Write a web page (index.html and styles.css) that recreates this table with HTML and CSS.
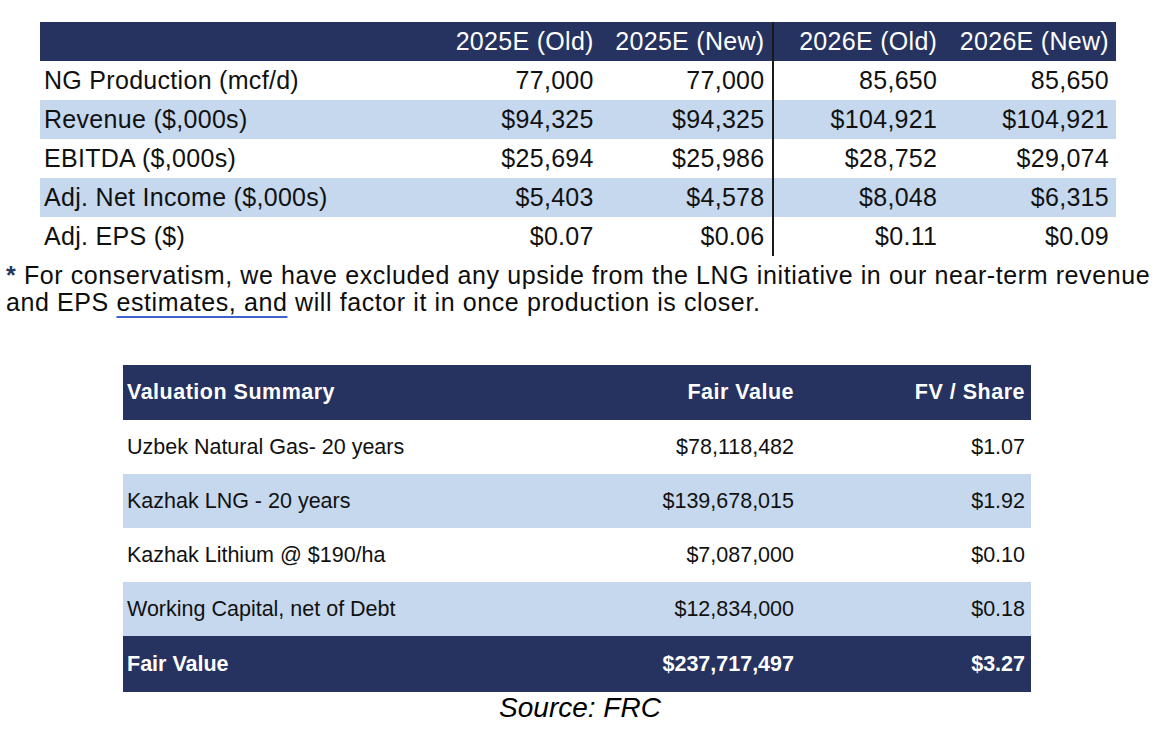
FILE: index.html
```html
<!DOCTYPE html>
<html>
<head>
<meta charset="utf-8">
<link rel="stylesheet" href="styles.css">
</head>
<body>
<div class="page">
  <table class="est">
    <colgroup>
      <col class="c-label"><col class="c-num"><col class="c-num"><col class="c-num"><col class="c-num">
    </colgroup>
    <thead>
      <tr>
        <th></th>
        <th>2025E (Old)</th>
        <th class="split">2025E (New)</th>
        <th>2026E (Old)</th>
        <th>2026E (New)</th>
      </tr>
    </thead>
    <tbody>
      <tr>
        <td>NG Production (mcf/d)</td><td>77,000</td><td class="split">77,000</td><td>85,650</td><td>85,650</td>
      </tr>
      <tr class="alt">
        <td>Revenue ($,000s)</td><td>$94,325</td><td class="split">$94,325</td><td>$104,921</td><td>$104,921</td>
      </tr>
      <tr>
        <td>EBITDA ($,000s)</td><td>$25,694</td><td class="split">$25,986</td><td>$28,752</td><td>$29,074</td>
      </tr>
      <tr class="alt">
        <td>Adj. Net Income ($,000s)</td><td>$5,403</td><td class="split">$4,578</td><td>$8,048</td><td>$6,315</td>
      </tr>
      <tr>
        <td>Adj. EPS ($)</td><td>$0.07</td><td class="split">$0.06</td><td>$0.11</td><td>$0.09</td>
      </tr>
    </tbody>
  </table>

  <p class="note"><span class="star">*</span> For conservatism, we have excluded any upside from the LNG initiative in our near-term revenue<br>and EPS <span class="spell">estimates, and</span> will factor it in once production is closer.</p>

  <div class="val-wrap">
    <table class="val">
      <colgroup>
        <col class="v-label"><col class="v-fv"><col class="v-sh">
      </colgroup>
      <thead>
        <tr><th>Valuation Summary</th><th>Fair Value</th><th>FV / Share</th></tr>
      </thead>
      <tbody>
        <tr><td>Uzbek Natural Gas- 20 years</td><td>$78,118,482</td><td>$1.07</td></tr>
        <tr class="alt"><td>Kazhak LNG - 20 years</td><td>$139,678,015</td><td>$1.92</td></tr>
        <tr><td>Kazhak Lithium @ $190/ha</td><td>$7,087,000</td><td>$0.10</td></tr>
        <tr class="alt"><td>Working Capital, net of Debt</td><td>$12,834,000</td><td>$0.18</td></tr>
      </tbody>
      <tfoot>
        <tr><td>Fair Value</td><td>$237,717,497</td><td>$3.27</td></tr>
      </tfoot>
    </table>
    <p class="source">Source: FRC</p>
  </div>
</div>
</body>
</html>
```

FILE: styles.css
```css
html, body {
  margin: 0;
  padding: 0;
  background: #ffffff;
}

body {
  font-family: "Liberation Sans", Arial, sans-serif;
  color: #111111;
}

.page {
  padding-top: 22px;
}

/* ---------- estimates table ---------- */
.est {
  margin-left: 40px;
  width: 1076px;
  border-collapse: collapse;
  table-layout: fixed;
  font-size: 25px;
  letter-spacing: 0.3px;
}

.est .c-label { width: 389px; }
.est .c-num { width: 171.75px; }

.est th,
.est td {
  padding: 0 7px 0 4px;
  height: 39px;
  line-height: 39px;
  white-space: nowrap;
  text-align: right;
  font-weight: normal;
}

.est th {
  background: #263360;
  color: #ffffff;
}

.est td:first-child {
  text-align: left;
}

.est tr.alt td {
  background: #c5d8ee;
}

.est .split {
  border-right: 2px solid #1a1a1a;
}

/* ---------- footnote ---------- */
.note {
  margin: 6px 0 0 6px;
  font-size: 25px;
  line-height: 27px;
  letter-spacing: 0.6px;
  white-space: nowrap;
  color: #0d0d0d;
}

.note .star {
  color: #1f3864;
  font-weight: bold;
}

.note .spell {
  text-decoration: underline;
  text-decoration-color: #3e63cf;
  text-decoration-thickness: 2px;
  text-underline-offset: 5px;
}

/* ---------- valuation table ---------- */
.val-wrap {
  margin: 49px 0 0 123px;
  width: 908px;
}

.val {
  width: 908px;
  border-collapse: collapse;
  table-layout: fixed;
  font-size: 21.5px;
}

.val .v-label { width: 450px; }
.val .v-fv { width: 227px; }
.val .v-sh { width: 231px; }

.val th,
.val td {
  padding: 0 6px 0 4px;
  height: 54px;
  white-space: nowrap;
  text-align: right;
}

.val th:first-child,
.val td:first-child {
  text-align: left;
}

.val thead th {
  height: 55px;
  background: #263360;
  color: #ffffff;
  font-weight: bold;
  letter-spacing: 0.5px;
}

.val tbody tr.alt td {
  background: #c5d8ee;
}

.val tfoot td {
  height: 56px;
  background: #263360;
  color: #ffffff;
  font-weight: bold;
}

.source {
  margin: 0;
  text-align: center;
  font-size: 28px;
  line-height: 32px;
  font-style: italic;
  color: #000000;
  padding-left: 6px;
}
```
